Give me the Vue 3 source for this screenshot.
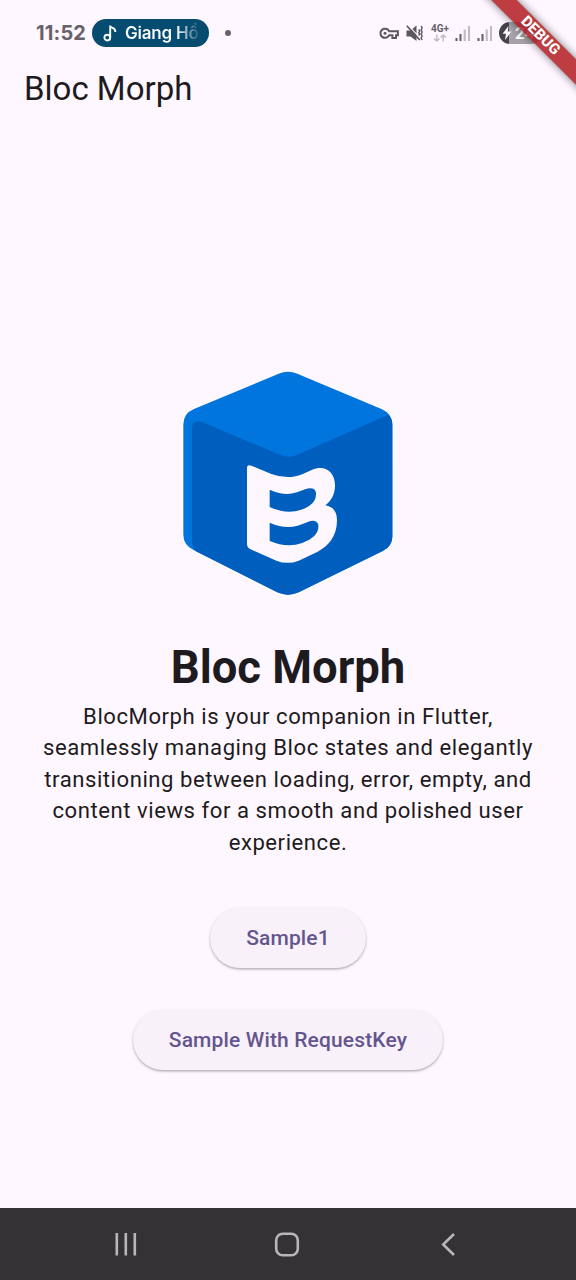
<script setup>
const samples = ['Sample1', 'Sample With RequestKey']
</script>

<template>
  <div class="screen">
    <header class="status">
      <span class="clock">11:52</span>
      <span class="chip">
        <svg class="note" width="16" height="20" viewBox="0 0 16 20">
          <circle cx="4.3" cy="14.600" r="2.900" />
          <path d="M7.200 14.600V2.500C7.500 6 12.800 3.800 12.300 9" />
        </svg>
        <span class="song">Giang Hồ</span>
      </span>
      <i class="dot"></i>
      <span class="icons">
        <svg class="key" width="20" height="13" viewBox="0 0 20 13">
          <path d="M10.200 4.300H18.900V8.200H17V11.100H13.400V8.200H10.200A4.600 4.600 0 1 1 10.200 4.300Z" />
          <circle cx="6" cy="6.250" r="1.500" />
        </svg>
        <svg class="mute" width="17" height="17" viewBox="0 0 17 17">
          <path class="fill" d="M.5 5.500H4.500L10.500 .5V16L4.500 11.500H.5Z" />
          <path class="gap" d="M2.200 .3L14.500 13.300" />
          <path class="line" d="M.8 .8L13.800 15" />
          <path class="line wave" d="M12.700 4.500l1 1.500-1 1.500 1 1.500-1 1.500M15.200 1l.9 2-.9 2 .9 2-.9 2 .9 2-.9 2 .9 2" />
        </svg>
        <span class="net">
          <b>4G+</b>
          <svg width="14" height="8" viewBox="0 0 14 8">
            <path d="M3.800 .5V7M1 4.500L3.800 7L6.500 4.500M10.200 7.500V1M7.500 3.500L10.200 1L13 3.500" />
          </svg>
        </span>
        <svg v-for="n in 2" :key="n" class="signal" width="16" height="17" viewBox="0 0 16 17">
          <path class="on" d="M1.500 13V16M5.500 9V16" />
          <path class="off" d="M9.700 4.500V16M14 1V16" />
        </svg>
        <span class="battery">
          <svg width="12" height="16" viewBox="0 0 12 16"><path d="M7.500 1L1.500 8.800H5L4 15L10.500 6.500H6.800Z" /></svg>
          <b>24</b>
        </span>
      </span>
    </header>
    <div class="appbar">Bloc Morph</div>
    <main>
      <svg class="logo" width="236" height="246" viewBox="0 0 708 738">
        <path fill="#0075dd" d="M326 41Q354 30 382 41L636 148Q667 162 667 194V530Q667 558 638 573L386 697Q354 711 322 697L72 571Q40 555 40 524V194Q40 160 72 147Z" />
        <path fill="#005fbe" d="M66 206Q66 176 98 187L330 284Q356 296 382 284L655 164Q667 176 667 194V530Q667 558 638 573L386 697Q354 711 322 697L78 574Q66 562 66 536Z" />
        <path fill="#fef7ff" fill-rule="evenodd" d="M231 324Q231 312 244 317L304 342Q356 361 400 341L430 328C466 314 495 336 495 376C495 402 484 423 466 436C490 440 501 455 501 481C501 529 475 559 443 575L386 602Q353 615 319 602L240 567Q231 562 231 552ZM299 389V441Q349 464 394 449C423 439 440 422 438 399C436 384 422 382 405 388C371 403 345 409 299 389ZM299 488V543Q350 565 397 549C430 536 447 520 445 496C443 482 430 479 413 486C374 503 345 508 299 488Z" />
      </svg>
      <h1>Bloc Morph</h1>
      <p>
        BlocMorph is your companion in Flutter,<br />
        seamlessly managing Bloc states and elegantly<br />
        transitioning between loading, error, empty, and<br />
        content views for a smooth and polished user<br />
        experience.
      </p>
      <button v-for="label in samples" :key="label">{{ label }}</button>
    </main>
    <nav>
      <svg width="576" height="72" viewBox="0 0 576 72">
        <path d="M116.800 25V47.500M125.800 25V47.500M134.800 25V47.500" />
        <rect x="276.200" y="25.700" width="21.600" height="21.600" rx="6.500" />
        <path d="M454 26L443.200 36.500L454 47" />
      </svg>
    </nav>
    <div class="banner">DEBUG</div>
  </div>
</template>

<style>
body { background: #fef7ff; }
</style>

<style scoped>
.screen { position: relative; width: 576px; height: 1280px; overflow: hidden; display: flex; flex-direction: column; background: #fef7ff; color: #1d1b20; font-family: Roboto, sans-serif; }
.status { height: 66px; box-sizing: border-box; padding: 0 29px 0 36px; display: flex; align-items: center; flex: none; }
.clock { width: 56px; font: 700 20px/26px Inter, sans-serif; color: #67626a; letter-spacing: .15px; }
.chip { width: 117px; height: 28px; box-sizing: border-box; padding-left: 11px; border-radius: 14px; background: #064c70; display: flex; align-items: center; color: #fff; flex: none; }
.note { fill: none; stroke: #fff; stroke-width: 1.900; margin-right: 6px; flex: none; }
.song { font: 600 17px/24px Inter, sans-serif; letter-spacing: -.2px; width: 73px; overflow: hidden; white-space: nowrap; background: linear-gradient(90deg, #fff 70%, #064c70 104%); background-clip: text; color: transparent; }
.dot { width: 6px; height: 6px; border-radius: 50%; background: #67626a; margin-left: 16px; }
.icons { display: flex; align-items: center; margin-left: auto; flex: none; width: 168px; }
.icons > * { flex: none; }
.key { fill: none; stroke: #5b575e; stroke-width: 2; }
.key circle { fill: #5b575e; stroke: none; }
.mute { margin-left: 7px; }
.fill { fill: #5b575e; }
.gap { stroke: #fef7ff; stroke-width: 1.200; }
.line { fill: none; stroke: #5b575e; stroke-width: 1.700; }
.wave { stroke-width: 1.400; }
.net { width: 20px; margin: 0 1px 0 7px; display: flex; flex-direction: column; align-items: center; }
.net b { font: 700 10px/10px Roboto, sans-serif; color: #67626a; }
.net svg { fill: none; stroke: #c0bac3; stroke-width: 1.400; }
.signal { margin-left: 4px; fill: none; stroke-width: 2.100; }
.signal + .signal { margin-left: 6px; }
.on { stroke: #67626a; }
.off { stroke: #c0bac3; }
.battery { width: 43px; height: 22px; margin-left: 6px; border-radius: 11px; background: linear-gradient(90deg, #464249 10px, #a7a2a9 10px); display: flex; align-items: center; color: #fff; }
.battery svg { fill: #fff; margin-left: 2px; }
.battery b { font: 700 17px/22px Roboto, sans-serif; margin-left: 2px; }
.appbar { height: 44px; flex: none; padding: 1px 0 0 24px; box-sizing: border-box; font-size: 33px; line-height: 44px; }
main { flex: 1; display: flex; flex-direction: column; align-items: center; padding-top: 250px; }
.logo { display: block; flex: none; }
h1 { margin: 36px 0 0; font-size: 45.400px; line-height: 52px; font-weight: 700; }
p { margin: 7px 0 0; font-size: 22.100px; line-height: 31.400px; letter-spacing: .55px; text-align: center; white-space: nowrap; }
button { height: 60px; flex: none; padding: 0 36px; border: 0; border-radius: 30px; background: #f8f1f9; color: #65558f; font: 500 21px/30px Roboto, sans-serif; letter-spacing: .15px; box-shadow: 0 1.500px 2px rgba(0,0,0,.24), 0 1px 4px rgba(0,0,0,.08); margin-top: 42px; }
p + button { margin-top: 50px; }
nav { height: 72px; flex: none; background: #353236; }
nav svg { display: block; fill: none; stroke: #b9b6ba; stroke-width: 2.600; }
.banner { position: absolute; left: 440px; top: 27px; width: 200px; height: 18px; transform: rotate(45deg); background: rgba(175,19,26,.82); box-shadow: 0 0 9px rgba(0,0,0,.5); color: #fff; font-size: 15px; line-height: 17px; font-weight: 800; text-align: center; }
</style>
